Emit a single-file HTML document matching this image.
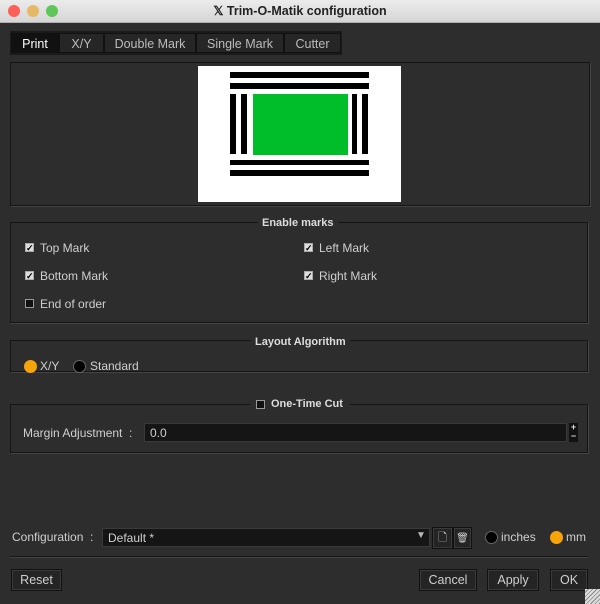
<html><head><style>
body{margin:0;width:600px;height:604px;background:#2d2d2d;font-family:"Liberation Sans",sans-serif;font-size:12px;color:#cfcfcf;position:relative;overflow:hidden}
.a{position:absolute}
.title{left:0;top:0;width:600px;height:22px;background:linear-gradient(#ececec,#d6d6d6);border-bottom:1px solid #b0b0b0;color:#222;font-weight:bold;font-size:12.5px;text-align:center;line-height:23px}
.dot{width:12px;height:12px;border-radius:50%;top:5px}
.tab{top:33px;height:20px;background:#262626;border:1px solid #111;line-height:20px;text-align:center;color:#bbb;font-size:12.5px;box-sizing:border-box}
.grp{border:1px solid #151515;box-shadow:1px 1px 0 #444;box-sizing:border-box}
.lbl{background:#2d2d2d;padding:0 4px;font-weight:bold;font-size:11px;color:#ddd}
.cb{width:9px;height:9px;border:1px solid #999;background:#111;box-sizing:border-box}
.ck{width:9px;height:9px;background:#ddd;border:1px solid #aaa;box-sizing:border-box;color:#000;font-size:9px;line-height:8px;text-align:center;font-weight:bold}
.rad{width:13px;height:13px;border-radius:50%;box-sizing:border-box}
.btn{height:22px;background:#242424;border:1px solid #111;box-shadow:inset 0 0 0 1px #3a3a3a;line-height:21px;text-align:center;box-sizing:border-box;font-size:12.5px}
.bk{background:#000}
</style></head><body>
<div class="a title">&#x1D54F; Trim-O-Matik configuration</div>
<div class="a dot" style="left:8px;background:#fc5f57"></div>
<div class="a dot" style="left:27px;background:#e4b865"></div>
<div class="a dot" style="left:46px;background:#5ec65a"></div>
<div class="a" style="left:10px;top:31px;width:332px;height:24px;background:#1a1a1a"></div>
<div class="a tab" style="left:11px;width:48px;background:#111;color:#fff">Print</div>
<div class="a tab" style="left:59px;width:45px">X/Y</div>
<div class="a tab" style="left:104px;width:92px">Double Mark</div>
<div class="a tab" style="left:196px;width:88px">Single Mark</div>
<div class="a tab" style="left:284px;width:57px">Cutter</div>
<div class="a grp" style="left:10px;top:62px;width:580px;height:144px"></div>
<div class="a" style="left:198px;top:66px;width:203px;height:136px;background:#fff"></div>
<div class="a bk" style="left:230px;top:72px;width:139px;height:6px"></div>
<div class="a bk" style="left:230px;top:83px;width:139px;height:6px"></div>
<div class="a bk" style="left:230px;top:160px;width:139px;height:5px"></div>
<div class="a bk" style="left:230px;top:170px;width:139px;height:6px"></div>
<div class="a bk" style="left:230px;top:94px;width:6px;height:60px"></div>
<div class="a bk" style="left:241px;top:94px;width:6px;height:60px"></div>
<div class="a bk" style="left:352px;top:94px;width:5px;height:60px"></div>
<div class="a bk" style="left:362px;top:94px;width:6px;height:60px"></div>
<div class="a" style="left:253px;top:94px;width:95px;height:61px;background:#00bd2a"></div>

<div class="a grp" style="left:10px;top:222px;width:578px;height:101px"></div>
<div class="a lbl" style="left:258px;top:215px;top:217px">Enable marks</div>
<div class="a ck" style="left:25px;top:243px">✓</div><div class="a" style="left:40px;top:241px">Top Mark</div>
<div class="a ck" style="left:25px;top:271px">✓</div><div class="a" style="left:40px;top:269px">Bottom Mark</div>
<div class="a cb" style="left:25px;top:299px"></div><div class="a" style="left:40px;top:297px">End of order</div>
<div class="a ck" style="left:304px;top:243px">✓</div><div class="a" style="left:319px;top:241px">Left Mark</div>
<div class="a ck" style="left:304px;top:271px">✓</div><div class="a" style="left:319px;top:269px">Right Mark</div>

<div class="a grp" style="left:10px;top:340px;width:578px;height:32px"></div>
<div class="a lbl" style="left:251px;top:336px">Layout Algorithm</div>
<div class="a rad" style="left:24px;top:360px;background:#f7a30a"></div><div class="a" style="left:40px;top:359px">X/Y</div>
<div class="a rad" style="left:73px;top:360px;background:#000;border:1px solid #666"></div><div class="a" style="left:90px;top:359px">Standard</div>

<div class="a grp" style="left:10px;top:404px;width:578px;height:49px"></div>
<div class="a" style="left:250px;top:398px;width:100px;height:12px;background:#2d2d2d"></div>
<div class="a cb" style="left:256px;top:400px"></div>
<div class="a lbl" style="left:267px;top:398px">One-Time Cut</div>
<div class="a" style="left:23px;top:426px">Margin Adjustment &nbsp;:</div>
<div class="a" style="left:144px;top:423px;width:423px;height:19px;background:#151515;border:1px solid #3a3a3a;box-sizing:border-box;padding-left:5px;line-height:18px">0.0</div>
<div class="a" style="left:569px;top:423px;width:9px;height:19px;background:#111;color:#ddd;font-size:9px;line-height:9px;text-align:center;font-weight:bold">+<br>−</div>

<div class="a" style="left:12px;top:530px">Configuration &nbsp;:</div>
<div class="a" style="left:102px;top:528px;width:328px;height:19px;background:#151515;border:1px solid #3a3a3a;box-sizing:border-box;padding-left:5px;line-height:18px">Default *</div>
<div class="a" style="left:416px;top:530px;color:#bbb;font-size:10px">▼</div>
<div class="a btn" style="left:432px;top:527px;width:21px;font-size:11px">🗋</div>
<div class="a btn" style="left:453px;top:527px;width:19px;font-size:10px">🗑</div>
<div class="a rad" style="left:485px;top:531px;background:#000;border:1px solid #666"></div><div class="a" style="left:501px;top:530px">inches</div>
<div class="a rad" style="left:550px;top:531px;background:#f7a30a"></div><div class="a" style="left:566px;top:530px">mm</div>
<div class="a" style="left:10px;top:556px;width:578px;height:1px;background:#151515;border-bottom:1px solid #444"></div>
<div class="a btn" style="left:11px;top:569px;width:51px">Reset</div>
<div class="a btn" style="left:419px;top:569px;width:58px">Cancel</div>
<div class="a btn" style="left:487px;top:569px;width:52px">Apply</div>
<div class="a btn" style="left:550px;top:569px;width:38px">OK</div>
<div class="a" style="left:585px;top:589px;width:15px;height:15px;background:repeating-linear-gradient(135deg,#ddd 0 2px,#888 2px 3px)"></div>
</body></html>
